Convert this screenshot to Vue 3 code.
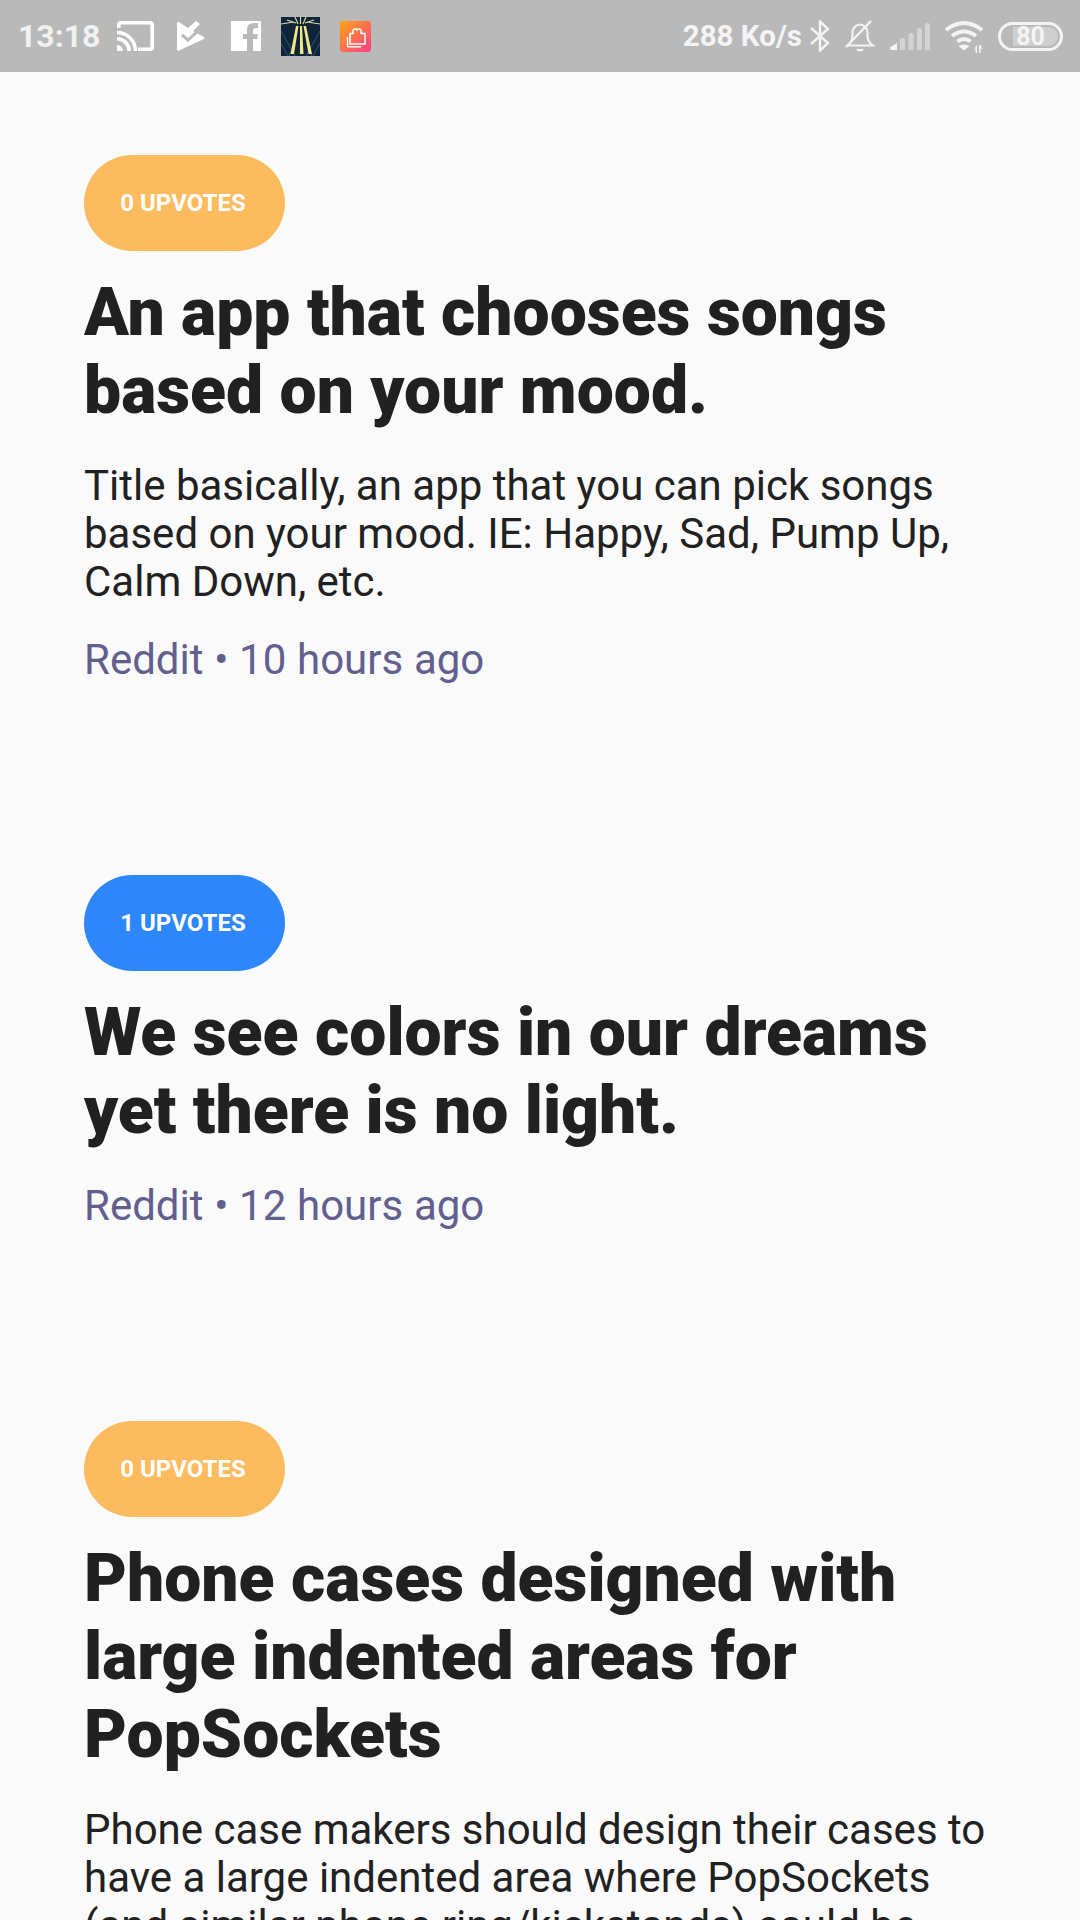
<template>
  <div class="screen">
    <div class="statusbar">
      <div class="status-left">
        <span class="clock">13:18</span>
        <svg class="ic-cast" width="37" height="30" viewBox="0 0 37 30">
          <path d="M1.800 7V3.800q0-2 2-2h29.400q2 0 2 2v22.400q0 2-2 2H21" fill="none" stroke="#fff" stroke-width="3.600"/>
          <path d="M0 11.500A18.500 18.500 0 0 1 18.500 30M0 17.800A12.200 12.200 0 0 1 12.200 30" fill="none" stroke="#fff" stroke-width="3.600"/>
          <path d="M0 24a6 6 0 0 1 6 6H0z" fill="#fff"/>
        </svg>
        <svg class="ic-play" width="28" height="30" viewBox="0 0 28 30">
          <path d="M0 2q0-2 2-1l9 6 8-7 4 3-7 7 11 6q1 1 0 2L2 29.500q-2 1-2-1z" fill="#fff"/>
          <path d="M5 14l6 5 10-9" fill="none" stroke="#b9b9b9" stroke-width="3"/>
        </svg>
        <svg class="ic-fb" width="30" height="30" viewBox="0 0 30 30">
          <path d="M0 0h30v30h-8V18h4l1-5h-5v-3q0-3 3-3h2V2h-4q-7 0-7 7v4h-4v5h4v12H0z" fill="#fff"/>
        </svg>
        <svg class="ic-road" width="39" height="39" viewBox="0 0 39 39">
          <rect width="39" height="39" fill="#10253a"/>
          <path d="M0 14l14 25M39 14L25 39M0 26l7 13M39 26l-7 13M8 39l5-13M31 39l-5-13" stroke="#2d5a78" stroke-width="1"/>
          <path d="M0 7l13-2M39 7L26 5M6 3l9 3M33 3l-9 3M14 0l3 7M25 0l-3 7M19.500 0v7" stroke="#dcd8a2" stroke-width="1.200"/>
          <path d="M15 9h2.500L13 37h-3.500zM19 9h2l1.500 28h-3.500zM22.500 9H25l6 28h-3.500z" fill="#f0e68a"/>
        </svg>
        <svg class="ic-app" width="31" height="31" viewBox="0 0 31 31">
          <defs>
            <linearGradient id="appgrad" x1="0" y1="0" x2="1" y2="1">
              <stop offset="0" stop-color="#ffa40f"/>
              <stop offset="1" stop-color="#ff3d8b"/>
            </linearGradient>
          </defs>
          <rect width="31" height="31" rx="3" fill="url(#appgrad)"/>
          <path d="M10 12.500h3v-3.500q3-2 4 0 2-2 4 0v3.500h4V23H10z" fill="none" stroke="#fff" stroke-width="1.500"/>
          <path d="M7.500 16v9q0 .8.800.8H21" fill="none" stroke="#fff" stroke-width="1.500"/>
        </svg>
      </div>
      <div class="status-right">
        <span class="speed">288 Ko/s</span>
        <svg width="20" height="32" viewBox="0 0 20 32">
          <path d="M1 8l17 15-8 7.500V1.500L18 9 1 24" fill="none" stroke="#f4f4f4" stroke-width="2.400"/>
        </svg>
        <svg width="30" height="32" viewBox="0 0 30 32">
          <path d="M3 25.500q4-3 4.500-9v-4q.5-7 7.500-8 7 1 7.500 8v4q.5 6 5.500 9z" fill="none" stroke="#f4f4f4" stroke-width="2.200"/>
          <path d="M1 27L26 1" stroke="#f4f4f4" stroke-width="2.200"/>
          <path d="M11 29h8q-1 2.500-4 2.500t-4-2.500z" fill="#f4f4f4"/>
        </svg>
        <svg width="40" height="27" viewBox="0 0 40 27">
          <path d="M0 24.500L7 20v7H1.500q-1.500 0-1.500-2.500z" fill="#f4f4f4"/>
          <path d="M10 17q0-2 2.500-2t2.500 2v10h-5zM18.500 12q0-2 2.500-2t2.500 2v15h-5zM27 7q0-2 2.500-2T32 7v20h-5zM35 2q0-2 2.500-2T40 2v25h-5z" fill="#d4d4d4"/>
        </svg>
        <svg width="38" height="33" viewBox="0 0 38 33">
          <path d="M1 10q18-14 36 0M7 16q12-9 24 0M12.500 21.500q6.500-5 13 0" fill="none" stroke="#f4f4f4" stroke-width="4"/>
          <path d="M19 30.500l-5.500-4.500q5.500-3 11 0z" fill="#f4f4f4"/>
          <path d="M32 25v8h-1.500v-4.500l-2 1.500zM34 33v-8h1.500l2 4.500-2-1v4.500z" fill="#f4f4f4"/>
        </svg>
        <div class="battery">
          <div class="battery-fill"></div>
          <span class="battery-text">80</span>
        </div>
      </div>
    </div>

    <div class="feed">
      <article v-for="post in posts" :key="post.title" class="post">
        <div class="badge" :class="post.votes > 0 ? 'badge-blue' : 'badge-orange'">{{ post.votes }} UPVOTES</div>
        <h2 class="title">{{ post.title }}</h2>
        <p v-if="post.body" class="body">{{ post.body }}</p>
        <div v-if="post.meta" class="meta">{{ post.meta }}</div>
      </article>
    </div>
  </div>
</template>

<script setup>
const posts = [
  {
    votes: 0,
    title: 'An app that chooses songs based on your mood.',
    body: 'Title basically, an app that you can pick songs based on your mood. IE: Happy, Sad, Pump Up, Calm Down, etc.',
    meta: 'Reddit • 10 hours ago'
  },
  {
    votes: 1,
    title: 'We see colors in our dreams yet there is no light.',
    meta: 'Reddit • 12 hours ago'
  },
  {
    votes: 0,
    title: 'Phone cases designed with large indented areas for PopSockets',
    body: 'Phone case makers should design their cases to have a large indented area where PopSockets (and similar phone ring/kickstands) could be attached.'
  }
]
</script>

<style>
html, body {
  margin: 0;
  background: #fafafa;
}
</style>

<style scoped>
.screen {
  width: 1080px;
  height: 1920px;
  overflow: hidden;
  background: #fafafa;
  font-family: Roboto, sans-serif;
}

.statusbar {
  height: 72px;
  background: #b9b9b9;
  display: flex;
  justify-content: space-between;
  align-items: center;
  padding: 0 17px 0 18px;
  box-sizing: border-box;
}

.status-left, .status-right {
  display: flex;
  align-items: center;
}

.status-right {
  gap: 15px;
}

.clock {
  width: 81px;
  font-size: 32px;
  font-weight: 700;
  color: #f1f1f1;
  margin-right: 18px;
}

.ic-play { margin-left: 23px; }
.ic-fb { margin-left: 26px; }
.ic-road { margin-left: 20px; }
.ic-app { margin-left: 20px; }

.speed {
  font-size: 29.5px;
  font-weight: 700;
  color: #f4f4f4;
  margin-right: -7px;
}

.battery {
  position: relative;
  width: 65px;
  height: 29px;
  border: 3px solid #f4f4f4;
  border-radius: 15px;
  box-sizing: border-box;
  display: flex;
  align-items: center;
  justify-content: center;
}

.battery-fill {
  position: absolute;
  left: 12px;
  right: 2px;
  top: 2px;
  bottom: 2px;
  background: #cfcfcf;
  border-radius: 0 10px 10px 0;
}

.battery-text {
  position: relative;
  font-size: 25px;
  font-weight: 700;
  color: #f4f4f4;
}

.feed {
  padding: 83px 84px 0;
}

.post {
  margin-bottom: 191px;
}

.badge {
  width: 201px;
  height: 96px;
  padding-right: 3px;
  box-sizing: border-box;
  border-radius: 48px;
  display: flex;
  align-items: center;
  justify-content: center;
  color: #fff;
  font-size: 24px;
  font-weight: 700;
}

.badge-orange { background: #fcbb5e; }
.badge-blue { background: #2e86fb; }

.title {
  margin: 23px 0 0;
  font-size: 66px;
  line-height: 78px;
  font-weight: 900;
  color: #212121;
}

.body {
  margin: 32px 0 0;
  font-size: 42px;
  line-height: 48px;
  font-weight: 400;
  color: #212121;
}

.meta {
  margin-top: 30px;
  font-size: 42px;
  line-height: 48px;
  word-spacing: 0.3px;
  color: #625f8f;
}

.title + .meta {
  margin-top: 32px;
}
</style>
